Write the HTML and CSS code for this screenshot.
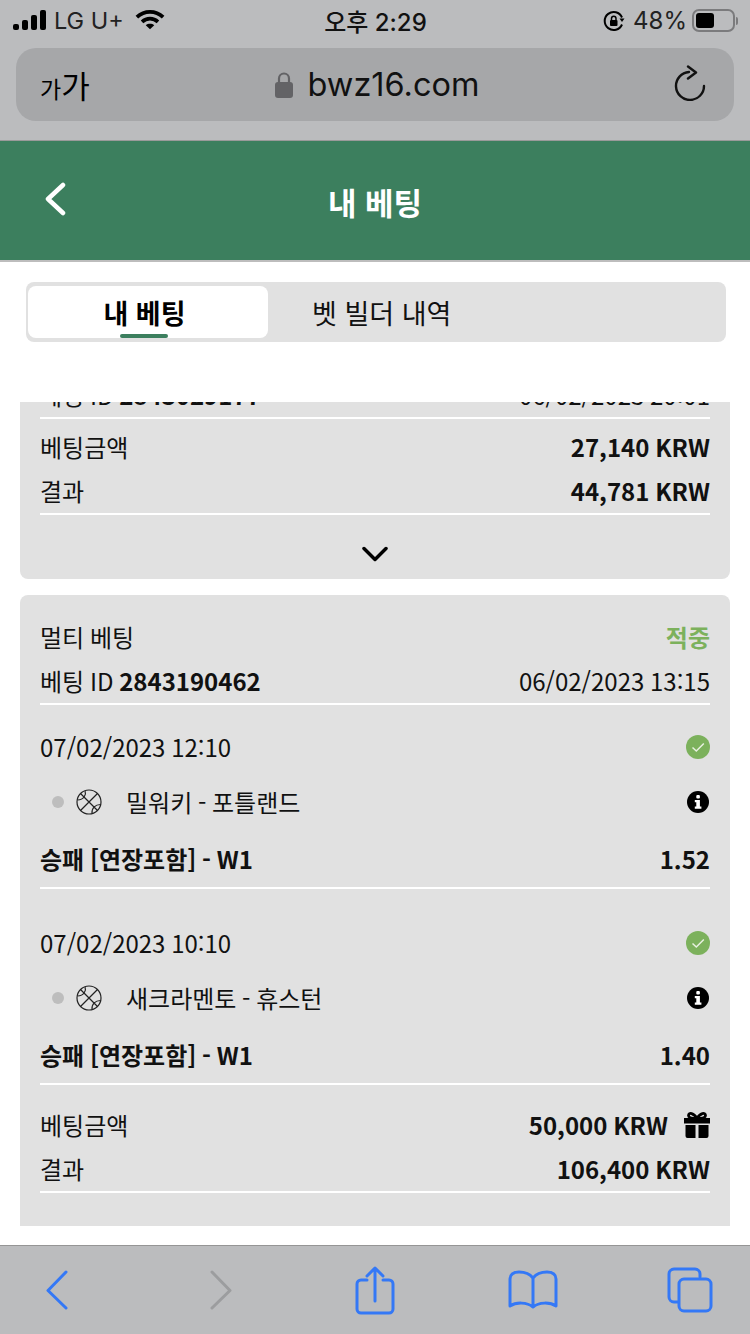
FILE: index.html
```html
<!DOCTYPE html>
<html lang="ko">
<head>
    <meta charset="UTF-8">
    <meta name="viewport" content="width=device-width, initial-scale=1.0">
    <title>내 베팅</title>
    <link rel="stylesheet" href="styles.css">
</head>
<body>
    <div class="page">
        <div class="browser-top">
            <div class="status-bar">
                <div class="status-left">
                    <svg class="signal" width="33" height="20" viewBox="0 0 33 20"><rect x="0" y="14" width="6" height="6" rx="2"/><rect x="9" y="10" width="6" height="10" rx="2"/><rect x="18" y="5" width="6" height="15" rx="2"/><rect x="27" y="0" width="6" height="20" rx="2"/></svg>
                    <span class="carrier">LG U+</span>
                    <svg class="wifi" width="30" height="21" viewBox="0 0 32 22" fill="none" stroke="#000" stroke-width="4"><path d="M2 8.500c8-7.500 20-7.500 28 0"/><path d="M7.500 13.500c5-4.500 12-4.500 17 0"/><path d="M16 21.500l-4.500-4.500c2.500-2 6.500-2 9 0z" fill="#000" stroke="none"/></svg>
                </div>
                <div class="clock">오후 2:29</div>
                <div class="status-right">
                    <svg class="rotation" width="22" height="22" viewBox="0 0 22 22" fill="none" stroke="#000" stroke-width="2"><path d="M19 14.500a9 9 0 1 1 0-7"/><path d="M16.500 8.500h5l-2.500 3.500z" fill="#000" stroke="none"/><rect x="7" y="10" width="7.500" height="6" rx="1" fill="#000" stroke="none"/><path d="M8.500 10V8.500a2.200 2.200 0 0 1 4.500 0V10" stroke-width="1.500"/></svg>
                    <span class="percent">48%</span>
                    <div class="battery"><div class="battery-fill"></div></div>
                    <div class="battery-cap"></div>
                </div>
            </div>
            <div class="address-bar">
                <div class="text-size"><span class="small-ga">가</span><span class="big-ga">가</span></div>
                <div class="url">
                    <svg width="18" height="28" viewBox="0 0 18 28" fill="none"><rect x="0" y="11" width="18" height="16" rx="3" fill="#636366"/><path d="M4 12V7.500a5 5 0 0 1 10 0V12" stroke="#636366" stroke-width="2.200"/></svg>
                    <span>bwz16.com</span>
                </div>
                <svg class="reload" width="32" height="36" viewBox="0 0 32 36" fill="none" stroke="#111" stroke-width="2.400" stroke-linecap="round" stroke-linejoin="round"><path d="M15 7A14 14 0 1 0 30 21"/><path d="M14 1.500l8 6-8 6"/></svg>
            </div>
        </div>

        <header class="app-header">
            <svg class="header-back" width="22" height="34" viewBox="0 0 22 34" fill="none" stroke="#fff" stroke-width="4.500" stroke-linecap="round" stroke-linejoin="round"><path d="M19 3L4 17l15 14"/></svg>
            <h1>내 베팅</h1>
            <span></span>
        </header>

        <div class="tabs-wrap">
            <div class="tabs">
                <div class="tab active">내 베팅</div>
                <div class="tab">벳 빌더 내역</div>
            </div>
        </div>

        <main class="bet-list">
            <section class="card">
                <div class="row line">
                    <span>베팅 ID <b>2843029177</b></span>
                    <span>06/02/2023 20:01</span>
                </div>
                <div class="row">
                    <span>베팅금액</span>
                    <b>27,140 KRW</b>
                </div>
                <div class="row line">
                    <span>결과</span>
                    <b>44,781 KRW</b>
                </div>
                <div class="expand">
                    <svg width="26" height="16" viewBox="0 0 26 16" fill="none" stroke="#000" stroke-width="3.500" stroke-linecap="round" stroke-linejoin="round"><path d="M2 2.500l11 11 11-11"/></svg>
                </div>
            </section>

            <section class="card multi">
                <div class="row">
                    <span>멀티 베팅</span>
                    <b class="won">적중</b>
                </div>
                <div class="row line">
                    <span>베팅 ID <b>2843190462</b></span>
                    <span>06/02/2023 13:15</span>
                </div>

                <div class="match">
                    <div class="row">
                        <span>07/02/2023 12:10</span>
                        <svg class="check" width="24" height="24" viewBox="0 0 24 24"><circle cx="12" cy="12" r="12" fill="#7cb15c"/><path d="M6.500 12.500l3.800 3.500 7.500-7.500" fill="none" stroke="#e8f0e0" stroke-width="1.500"/></svg>
                    </div>
                    <div class="row teams">
                        <span class="team-name">
                            <i class="dot"></i>
                            <svg class="ball" width="26" height="26" viewBox="0 0 26 26" fill="none" stroke="#222" stroke-width="1.200"><circle cx="13" cy="13" r="12"/><path d="M4.500 4.500l17 17M21.500 4.500l-17 17M9 1.700c1.500 4-1 9-7.500 9.300M24.500 15.500c-5 0-9 3.500-8.500 9"/></svg>
                            밀워키 - 포틀랜드
                        </span>
                        <svg class="info" width="22" height="22" viewBox="0 0 22 22"><circle cx="11" cy="11" r="11" fill="#000"/><rect x="9.300" y="4" width="3.600" height="3.400" rx="1" fill="#fff"/><path d="M7.800 9h5.100v6.500h1.500v2.300H7.800v-2.300h1.500v-4.200H7.800z" fill="#fff"/></svg>
                    </div>
                    <div class="row market">
                        <b>승패 [연장포함] - W1</b>
                        <b>1.52</b>
                    </div>
                </div>

                <div class="match">
                    <div class="row">
                        <span>07/02/2023 10:10</span>
                        <svg class="check" width="24" height="24" viewBox="0 0 24 24"><circle cx="12" cy="12" r="12" fill="#7cb15c"/><path d="M6.500 12.500l3.800 3.500 7.500-7.500" fill="none" stroke="#e8f0e0" stroke-width="1.500"/></svg>
                    </div>
                    <div class="row teams">
                        <span class="team-name">
                            <i class="dot"></i>
                            <svg class="ball" width="26" height="26" viewBox="0 0 26 26" fill="none" stroke="#222" stroke-width="1.200"><circle cx="13" cy="13" r="12"/><path d="M4.500 4.500l17 17M21.500 4.500l-17 17M9 1.700c1.500 4-1 9-7.500 9.300M24.500 15.500c-5 0-9 3.500-8.500 9"/></svg>
                            새크라멘토 - 휴스턴
                        </span>
                        <svg class="info" width="22" height="22" viewBox="0 0 22 22"><circle cx="11" cy="11" r="11" fill="#000"/><rect x="9.300" y="4" width="3.600" height="3.400" rx="1" fill="#fff"/><path d="M7.800 9h5.100v6.500h1.500v2.300H7.800v-2.300h1.500v-4.200H7.800z" fill="#fff"/></svg>
                    </div>
                    <div class="row market">
                        <b>승패 [연장포함] - W1</b>
                        <b>1.40</b>
                    </div>
                </div>

                <div class="summary">
                    <div class="row">
                        <span>베팅금액</span>
                        <span class="stake">
                            <b>50,000 KRW</b>
                            <svg width="26" height="26" viewBox="0 0 26 26"><path d="M0 6h26v5.500H0zM1.500 13h10v13h-8a2 2 0 0 1-2-2zM14.500 13h10v11a2 2 0 0 1-2 2h-8z"/><path d="M13 6.500C10 1 4.500 0 4.500 3.500 4.500 5.500 8 6.500 13 6.500zM13 6.500c3-5.500 8.500-6.500 8.500-3 0 2-3.500 3-8.500 3z" fill="none" stroke="#000" stroke-width="2.800"/></svg>
                        </span>
                    </div>
                    <div class="row line">
                        <span>결과</span>
                        <b>106,400 KRW</b>
                    </div>
                </div>
            </section>
        </main>

        <nav class="browser-bottom">
            <svg class="nav-back" width="24" height="40" viewBox="0 0 24 40" fill="none" stroke="#3478f6" stroke-width="3" stroke-linecap="round" stroke-linejoin="round"><path d="M21 2L3 20.500 21 38"/></svg>
            <svg class="nav-forward" width="24" height="40" viewBox="0 0 24 40" fill="none" stroke="#9c9d9f" stroke-width="3" stroke-linecap="round" stroke-linejoin="round"><path d="M3 2l18 18.500L3 38"/></svg>
            <svg class="nav-share" width="40" height="50" viewBox="0 0 40 50" fill="none" stroke="#3478f6" stroke-width="3" stroke-linecap="round" stroke-linejoin="round"><path d="M12 15H6a4 4 0 0 0-4 4v25a4 4 0 0 0 4 4h28a4 4 0 0 0 4-4V19a4 4 0 0 0-4-4h-6"/><path d="M20 36V3M12 11l8-8 8 8"/></svg>
            <svg class="nav-book" width="50" height="40" viewBox="0 0 50 40" fill="none" stroke="#3478f6" stroke-width="3" stroke-linecap="round" stroke-linejoin="round"><path d="M25 8C22 4 17 2 11 2 5 2 2 5 2 9v27c6-4 17-4 23 1 6-5 17-5 23-1V9c0-4-3-7-9-7-6 0-11 2-14 6zM25 8v29"/></svg>
            <svg class="nav-tabs" width="46" height="46" viewBox="0 0 46 46" fill="none" stroke="#3478f6" stroke-width="3" stroke-linecap="round" stroke-linejoin="round"><path d="M33 10V7a5 5 0 0 0-5-5H7a5 5 0 0 0-5 5v23a5 5 0 0 0 5 5h4"/><rect x="12" y="12" width="32" height="32" rx="5"/></svg>
        </nav>
    </div>
</body>
</html>
```

FILE: styles.css
```css
* {
    margin: 0;
    padding: 0;
    box-sizing: border-box;
}

body {
    font-family: "Noto Sans CJK KR", "Noto Sans", sans-serif;
    background: #fff;
    color: #111;
}

.page {
    width: 750px;
    height: 1334px;
    display: flex;
    flex-direction: column;
    overflow: hidden;
}

.browser-top {
    height: 141px;
    background: #bbbcbe;
    border-bottom: 1px solid #9a9a9a;
    padding: 0 16px;
}

.status-bar {
    height: 48px;
    display: grid;
    grid-template-columns: 1fr auto 1fr;
    align-items: center;
    font-family: Inter, "Noto Sans CJK KR", sans-serif;
    font-size: 24px;
    padding-bottom: 7px;
    margin: 0 -4px 0 -3px;
}

.status-left {
    display: flex;
    align-items: center;
}

.signal {
    margin-bottom: 1px;
}

.carrier {
    margin-left: 8px;
    color: #222;
    font-size: 23.5px;
}

.wifi {
    margin-left: 11px;
    margin-bottom: 3px;
}

.clock {
    font-weight: 500;
}

.status-right {
    display: flex;
    align-items: center;
    justify-content: flex-end;
}

.percent {
    margin-left: 8px;
    color: #222;
}

.battery {
    width: 43px;
    height: 23px;
    margin-left: 5px;
    border: 2px solid #7b7b7d;
    border-radius: 7px;
    padding: 2px;
}

.battery-fill {
    width: 18px;
    height: 15px;
    background: #000;
    border-radius: 3px;
}

.battery-cap {
    width: 2px;
    height: 8px;
    margin-left: 1px;
    background: #7b7b7d;
    border-radius: 0 2px 2px 0;
}

.address-bar {
    height: 73px;
    background: #a6a7a9;
    border-radius: 20px;
    display: grid;
    grid-template-columns: 1fr auto 1fr;
    align-items: center;
    padding: 0 28px 0 24px;
}

.text-size {
    display: flex;
    align-items: baseline;
    color: #000;
}

.small-ga {
    font-size: 23px;
}

.big-ga {
    font-size: 31px;
}

.url {
    display: flex;
    align-items: center;
    gap: 14px;
    margin-left: 9px;
    font-family: Inter, sans-serif;
    font-size: 32.5px;
    color: #111;
}

.reload {
    justify-self: end;
    margin-bottom: 3px;
}

.app-header {
    height: 121px;
    background: #3c7f5e;
    border-bottom: 2px solid #bdbdbd;
    display: grid;
    grid-template-columns: 1fr auto 1fr;
    align-items: center;
    padding: 0 44px;
    color: #fff;
}

.header-back {
    margin-bottom: 4px;
}

.app-header h1 {
    font-size: 31px;
    font-weight: 700;
    margin-top: 2px;
}

.tabs-wrap {
    height: 140px;
    padding: 20px 24px 0 26px;
    background: #fff;
}

.tabs {
    height: 60px;
    background: #e1e1e1;
    border-radius: 8px;
    padding: 4px 2px;
    display: grid;
    grid-template-columns: 240px 1fr;
}

.tab {
    position: relative;
    display: flex;
    align-items: center;
    font-size: 27px;
    padding-left: 44px;
}

.tab.active {
    background: #fff;
    border-radius: 8px;
    font-weight: 700;
    padding: 0 7px 0 0;
    justify-content: center;
    color: #000;
}

.tab.active::after {
    content: "";
    position: absolute;
    left: 92px;
    bottom: 0;
    width: 48px;
    height: 4px;
    border-radius: 2px;
    background: #3c7f5e;
}

.bet-list {
    flex: 1;
    min-height: 0;
    overflow: hidden;
    display: flex;
    flex-direction: column;
    justify-content: flex-end;
    gap: 16px;
    padding: 0 20px 19px;
}

.card {
    flex-shrink: 0;
    background: #e1e1e1;
    border-radius: 8px;
    padding: 0 20px;
}

.multi {
    padding: 21px 20px 33px;
    border-radius: 8px 8px 0 0;
}

.row {
    height: 44px;
    display: flex;
    align-items: center;
    justify-content: space-between;
    font-size: 24px;
    line-height: 1;
    word-spacing: -1px;
    padding-bottom: 2px;
}

.row.line {
    height: 45px;
    padding-bottom: 2px;
    border-bottom: 2px solid #fff;
}

.line + .row {
    margin-top: 7px;
}

.row b {
    font-weight: 700;
    color: #111;
}

.row .won {
    color: #7cb15c;
}

.expand {
    height: 64px;
    display: flex;
    align-items: center;
    justify-content: center;
    padding-top: 13px;
}

.match {
    height: 196px;
    padding-top: 21px;
}

.check {
    margin-bottom: 1px;
}

.teams {
    margin-top: 11px;
}

.team-name {
    display: flex;
    align-items: center;
    padding-left: 12px;
}

.dot {
    width: 12px;
    height: 12px;
    border-radius: 50%;
    background: #bdbdbd;
    margin-right: 12px;
}

.ball {
    margin-right: 24px;
}

.info {
    margin-right: 1px;
}

.market {
    margin-top: 13px;
    height: 51px;
    padding-bottom: 7px;
    border-bottom: 2px solid #fff;
}

.summary {
    padding-top: 7px;
}

.stake {
    display: flex;
    align-items: center;
    gap: 16px;
}

.browser-bottom {
    height: 89px;
    flex-shrink: 0;
    background: #bbbcbe;
    border-top: 1px solid #959595;
    display: flex;
    align-items: center;
    padding-left: 45px;
}

.nav-forward {
    margin-left: 140px;
}

.nav-share {
    margin-left: 122px;
}

.nav-book {
    margin-left: 113px;
}

.nav-tabs {
    margin-left: 109px;
}
```
